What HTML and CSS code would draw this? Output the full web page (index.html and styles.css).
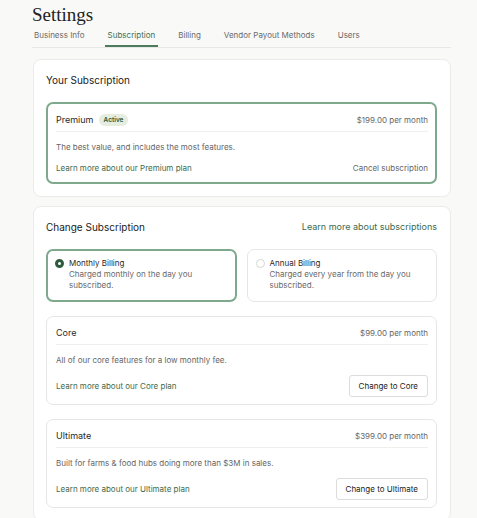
FILE: index.html
```html
<!DOCTYPE html>
<html lang="en">
<head>
    <meta charset="UTF-8">
    <title>Settings</title>
    <link rel="stylesheet" href="styles.css">
</head>

<body>
    <main class="settings">
        <h1 class="settings-title">Settings</h1>
        <nav class="tabs">
            <a class="tab" href="#">Business Info</a>
            <a class="tab tab-active" href="#">Subscription</a>
            <a class="tab" href="#">Billing</a>
            <a class="tab" href="#">Vendor Payout Methods</a>
            <a class="tab" href="#">Users</a>
        </nav>

        <section class="panel">
            <div class="panel-head">
                <h2 class="panel-title">Your Subscription</h2>
            </div>
            <div class="plan plan-current">
                <div class="plan-head">
                    <span class="plan-name">Premium</span>
                    <span class="badge">Active</span>
                    <span class="plan-price">$199.00 per month</span>
                </div>
                <p class="plan-desc">The best value, and includes the most features.</p>
                <div class="plan-foot">
                    <a class="link" href="#">Learn more about our Premium plan</a>
                    <a class="muted-link" href="#">Cancel subscription</a>
                </div>
            </div>
        </section>

        <section class="panel">
            <div class="panel-head">
                <h2 class="panel-title">Change Subscription</h2>
                <a class="link link-large" href="#">Learn more about subscriptions</a>
            </div>
            <div class="billing">
                <label class="billing-option billing-selected">
                    <span class="radio radio-on"></span>
                    <span class="billing-text">
                        <strong>Monthly Billing</strong>
                        <span>Charged monthly on the day you subscribed.</span>
                    </span>
                </label>
                <label class="billing-option">
                    <span class="radio"></span>
                    <span class="billing-text">
                        <strong>Annual Billing</strong>
                        <span>Charged every year from the day you subscribed.</span>
                    </span>
                </label>
            </div>

            <div class="plan">
                <div class="plan-head">
                    <span class="plan-name">Core</span>
                    <span class="plan-price">$99.00 per month</span>
                </div>
                <p class="plan-desc">All of our core features for a low monthly fee.</p>
                <div class="plan-foot">
                    <a class="link" href="#">Learn more about our Core plan</a>
                    <button class="btn">Change to Core</button>
                </div>
            </div>

            <div class="plan">
                <div class="plan-head">
                    <span class="plan-name">Ultimate</span>
                    <span class="plan-price">$399.00 per month</span>
                </div>
                <p class="plan-desc">Built for farms &amp; food hubs doing more than $3M in sales.</p>
                <div class="plan-foot">
                    <a class="link" href="#">Learn more about our Ultimate plan</a>
                    <button class="btn">Change to Ultimate</button>
                </div>
            </div>
        </section>
    </main>
</body>

</html>
```

FILE: styles.css
```css
html {
    background: #f9f9f8;
}

body {
    margin: 0;
    font-family: Inter, "Noto Sans", sans-serif;
    color: #2b2b2b;
}

a {
    text-decoration: none;
}

p,
h1,
h2 {
    margin: 0;
}

.settings {
    padding: 0 26px 20px 32px;
}

.settings-title {
    font-family: "Liberation Serif", serif;
    font-weight: 400;
    font-size: 19px;
    line-height: 22px;
    padding-top: 4px;
    color: #222;
}

/* tab strip */
.tabs {
    display: flex;
    gap: 17px;
    border-bottom: 1px solid #e8e8e6;
}

.tab {
    font-size: 8px;
    line-height: 10px;
    color: #6b6b6b;
    padding: 4px 3px 5px;
    border-bottom: 2px solid transparent;
}

.tab:first-child {
    padding-left: 2px;
}

.tab-active {
    color: #3f6f4f;
    border-bottom-color: #4d7b5b;
}

/* white panels */
.panel {
    background: #fff;
    border: 1px solid #ebebe9;
    border-radius: 8px;
    margin: 11px 0 0 1px;
    padding: 14px 13px 12px 12px;
}

.panel + .panel {
    margin-top: 9px;
}

.panel-head {
    display: flex;
    justify-content: space-between;
    align-items: center;
    height: 12px;
    margin-bottom: 16px;
}

.panel-title {
    font-size: 10px;
    line-height: 12px;
    font-weight: 400;
    color: #222;
}

.link {
    color: #3e6b4c;
    font-size: 8px;
    line-height: 10px;
}

.link-large {
    font-size: 9px;
    line-height: 12px;
}

.muted-link {
    color: #666;
    font-size: 8px;
    line-height: 10px;
}

/* plan cards */
.plan {
    border: 1px solid #e6e6e4;
    border-radius: 7px;
    padding: 9px 8px 7px 9px;
    margin-top: 14px;
}

.plan-current {
    border: 2px solid #7fa98c;
    padding: 9px 7px 9px 8px;
    margin-top: 0;
}

.plan-head {
    display: flex;
    align-items: center;
    gap: 5px;
    height: 13px;
    padding-bottom: 5px;
    border-bottom: 1px solid #efefed;
}

.plan-name {
    font-size: 9px;
    line-height: 12px;
    color: #2a2a2a;
}

.plan-price {
    margin-left: auto;
    font-size: 8px;
    color: #666;
}

.badge {
    background: #e4eddf;
    color: #2d5a3a;
    font-size: 6.5px;
    line-height: 8px;
    font-weight: 600;
    padding: 2px 5px;
    border-radius: 8px;
}

.plan-desc {
    font-size: 8px;
    line-height: 10px;
    color: #666;
    padding: 10px 0;
}

.plan-current .plan-desc {
    padding-bottom: 11px;
}

.plan-foot {
    display: flex;
    justify-content: space-between;
    align-items: center;
}

.btn {
    font-family: inherit;
    font-size: 8px;
    line-height: 10px;
    color: #222;
    background: #fff;
    border: 1px solid #dcdcda;
    border-radius: 3px;
    padding: 5px 9px;
    height: 22px;
}

/* billing period choice */
.billing {
    display: grid;
    grid-template-columns: 1fr 1fr;
    gap: 10px;
}

.billing-option {
    display: flex;
    gap: 5px;
    align-items: flex-start;
    border: 1px solid #e6e6e4;
    border-radius: 7px;
    padding: 8px 10px 10px 8px;
}

.billing-selected {
    border: 2px solid #7fa98c;
    padding: 7px 9px 9px 7px;
}

.radio {
    width: 7px;
    height: 7px;
    margin-top: 1px;
    border: 1px solid #d6d6d4;
    border-radius: 50%;
    flex: none;
}

.radio-on {
    border: 3px solid #2f5b3d;
    width: 3px;
    height: 3px;
}

.billing-text {
    display: flex;
    flex-direction: column;
    font-size: 8px;
    line-height: 11px;
    color: #6a6a6a;
}

.billing-text strong {
    font-weight: 400;
    color: #2a2a2a;
}
```
